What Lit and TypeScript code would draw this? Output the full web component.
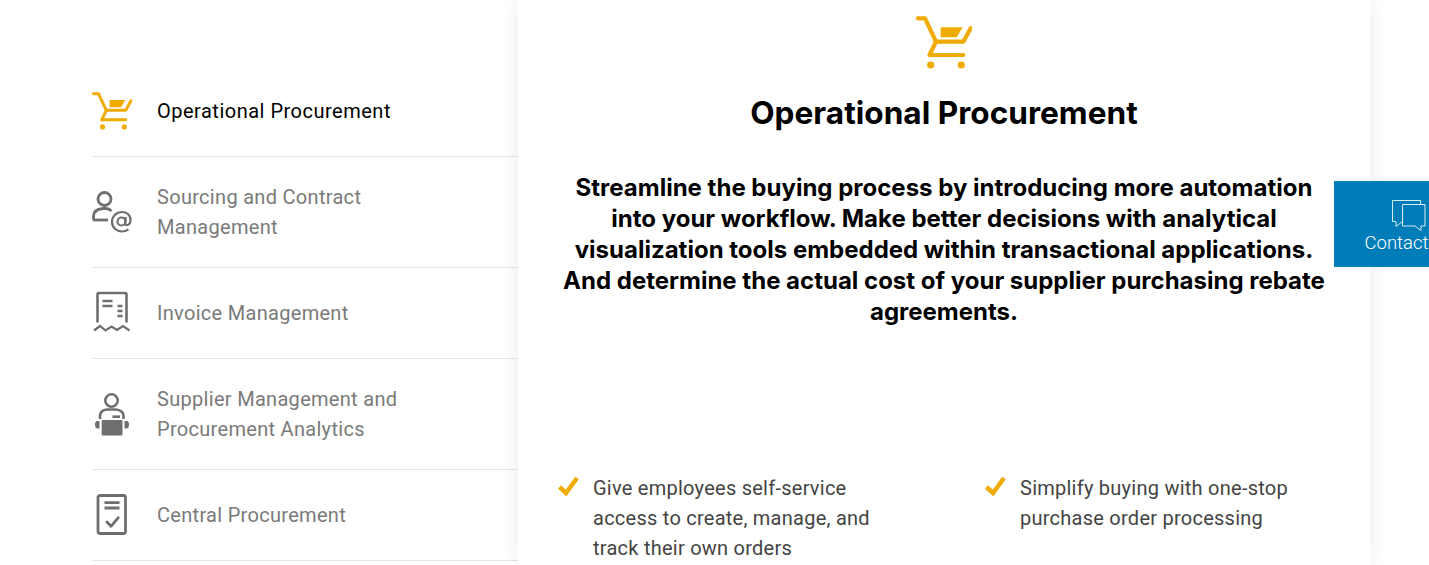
import { LitElement, html, css, svg } from "lit";
import { customElement } from "lit/decorators.js";

const cart = (cls: string) => html`<svg class=${cls} viewBox="0 0 56 54" fill="none" stroke="#f0ab00" stroke-width="4.2" stroke-linecap="round" stroke-linejoin="round">
  <path d="M2 2.3H9L20 25.7H47.3L54.7 12.3"/>
  <path d="M20 25.7L13.5 39H47.3"/>
  <polygon points="24.7,11.3 46.7,11.3 40.7,21.3 24.7,21.3" fill="#f0ab00" stroke="none"/>
  <circle cx="14.7" cy="49" r="3.6" fill="#f0ab00" stroke="none"/>
  <circle cx="45.3" cy="49" r="3.6" fill="#f0ab00" stroke="none"/>
</svg>`;

const G = "#6f6f6f";
const personAt = svg`<g fill="none" stroke="${G}" stroke-width="2.8">
  <circle cx="12.500" cy="9" r="6.500"/>
  <path d="M1.500 30V26C1.500 21 6 19 11 18.500H14C16 18.500 18 19.500 19.500 21"/>
  <path d="M1 30H16"/>
  <g stroke-width="2.200" transform="translate(-0.500 -3.500)"><circle cx="30" cy="35" r="4"/>
  <path d="M34.300 30.500L33.600 37C33.400 39.600 38.600 39.400 39 34C39.400 28 34.500 25.500 30.500 25.500C24.500 25.500 20.500 30 20.500 35.500C20.500 41 25 45 30.500 45C33 45 35 44.200 37 43"/></g>
</g>`;
const invoice = svg`<g fill="none" stroke="${G}" stroke-width="2.6">
  <path d="M5.500 31.500V3.500Q5.500 2 7 2H33Q34.500 2 34.500 3.500V31.500"/>
  <path d="M2 39.500L8 35L13.500 39.500L19.500 35.500L25 39L31 35L37.500 39.500" stroke-width="2.200"/>
  <path d="M10.500 10H20.500M10.500 15H20.500M25.500 15H30.500M25.500 20H30.500M25.500 25H30.500"/>
</g>`;
const supplier = svg`<g fill="none" stroke="${G}" stroke-width="2.6">
  <circle cx="19.500" cy="8.500" r="6.200"/>
  <path d="M8 27V24C8 20 11 18 15 17.500H24C28 18 31.500 20 31.500 24V27"/>
  <path d="M20.500 24.700H28"/>
  <rect x="9.700" y="28" width="20.800" height="15.500" rx="1" fill="${G}" stroke="none"/>
  <path d="M7.500 29H5.500C3.500 29 3 31 3 32.700C3 34.500 3.500 36.500 5.500 36.500H7.500Z" fill="${G}" stroke="none"/>
  <path d="M32.500 29H34.500C36.500 29 37 31 37 32.700C37 34.500 36.500 36.500 34.500 36.500H32.500Z" fill="${G}" stroke="none"/>
</g>`;
const central = svg`<g fill="none" stroke="${G}" stroke-width="2.800">
  <rect x="6" y="2.500" width="27.500" height="38" rx="2"/>
  <path d="M12.500 9.700H27.500M12.500 15H27.500"/>
  <path d="M15 29L19 33.300L26.300 24.700" stroke-linecap="round" stroke-linejoin="round"/>
</g>`;

const items = [
  { label: "Operational Procurement", icon: null },
  { label: "Sourcing and Contract Management", icon: personAt },
  { label: "Invoice Management", icon: invoice },
  { label: "Supplier Management and Procurement Analytics", icon: supplier },
  { label: "Central Procurement", icon: central },
];

const features = [
  "Give employees self-service access to create, manage, and track their own orders",
  "Simplify buying with one-stop purchase order processing",
];

@customElement("app-root")
export class AppRoot extends LitElement {
  static styles = css`
    :host {
      display: block;
      position: relative;
      width: 1429px;
      height: 565px;
      overflow: hidden;
      background: #fff;
      font-family: "Roboto", "Liberation Sans", sans-serif;
    }
    .page { display: grid; grid-template-columns: 426px 852px; padding-left: 92px; height: 565px; }
    .nav { padding-top: 66px; }
    .row {
      display: grid;
      grid-template-columns: 65px 270px;
      align-items: center;
      padding: 25px 0;
      min-height: 40px;
      border-bottom: 1px solid #e5e5e5;
      font-size: 20px;
      line-height: 30px;
      letter-spacing: 0.3px;
      color: #7a7a7a;
    }
    .row.active { color: #000; letter-spacing: 0.5px; }
    .row svg { display: block; }
    .nav-ico { width: 40px; height: 44px; margin: -8px 0; overflow: visible; }
    .cart-s { width: 40px; height: 38.5px; margin: -5px 0; }
    .panel {
      position: relative;
      background: #fff;
      box-shadow: 0 0 22px rgba(0, 0, 0, 0.07);
      padding: 16px 40px 0;
      display: flex;
      flex-direction: column;
      align-items: center;
    }
    .cart-l { width: 56px; height: 54px; }
    h2 {
      margin: 23px 0 0;
      font-family: "Inter", "Roboto", sans-serif;
      font-size: 31.6px;
      line-height: 40px;
      font-weight: 700;
      color: #000;
      text-align: center;
    }
    .lead {
      margin: 39px 0 0;
      width: 772px;
      font-family: "Inter", "Roboto", sans-serif;
      font-size: 24px;
      line-height: 31px;
      font-weight: 700;
      color: #000;
      text-align: center;
    }
    .features {
      align-self: stretch;
      display: grid;
      grid-template-columns: 427px 345px;
      margin-top: 146px;
    }
    .feature {
      display: grid;
      grid-template-columns: 35px 285px;
      font-size: 20px;
      line-height: 30px;
      color: #444;
      letter-spacing: 0.25px;
    }
    .check { width: 22px; height: 21px; margin-top: 2px; }
    .contact {
      position: absolute;
      left: 1334px;
      top: 181px;
      width: 149px;
      height: 86px;
      background: #007db8;
      color: #fff;
      font-size: 18.5px;
      font-weight: 300;
      line-height: 24px;
      display: flex;
      flex-direction: column;
      align-items: center;
      padding-top: 19px;
      box-sizing: border-box;
    }
    .bubbles { width: 34px; height: 32px; display: block; margin-bottom: -1px; }
  `;

  render() {
    return html`
      <div class="page">
        <nav class="nav">
          ${items.map(
            (it, i) => html`<div class="row ${i === 0 ? "active" : ""}">
              ${it.icon
                ? html`<svg class="nav-ico" viewBox="0 0 40 44">${it.icon}</svg>`
                : cart("cart-s")}
              <span>${it.label}</span>
            </div>`
          )}
        </nav>
        <main class="panel">
          ${cart("cart-l")}
          <h2>Operational Procurement</h2>
          <p class="lead">
            Streamline the buying process by introducing more automation into your workflow. Make better decisions with analytical visualization tools embedded within transactional applications. And determine the actual cost of your supplier purchasing rebate agreements.
          </p>
          <div class="features">
            ${features.map(
              (f) => html`<div class="feature">
                <svg class="check" viewBox="0 0 22 21"><path d="M1.500 12L8 18L19 3" fill="none" stroke="#f0ab00" stroke-width="4.500"/></svg>
                <span>${f}</span>
              </div>`
            )}
          </div>
        </main>
      </div>
      <aside class="contact">
        <svg class="bubbles" viewBox="0 0 34 32" fill="none" stroke="#d8ecf5" stroke-width="1">
          <path d="M28.500 4.500V.5H.5V21.500H4V26.500L10.500 21.500"/>
          <path d="M10.500 4.500H33V26H29V30.500L23 26H10.500Z"/>
        </svg>
        <span>Contact us</span>
      </aside>
    `;
  }
}
